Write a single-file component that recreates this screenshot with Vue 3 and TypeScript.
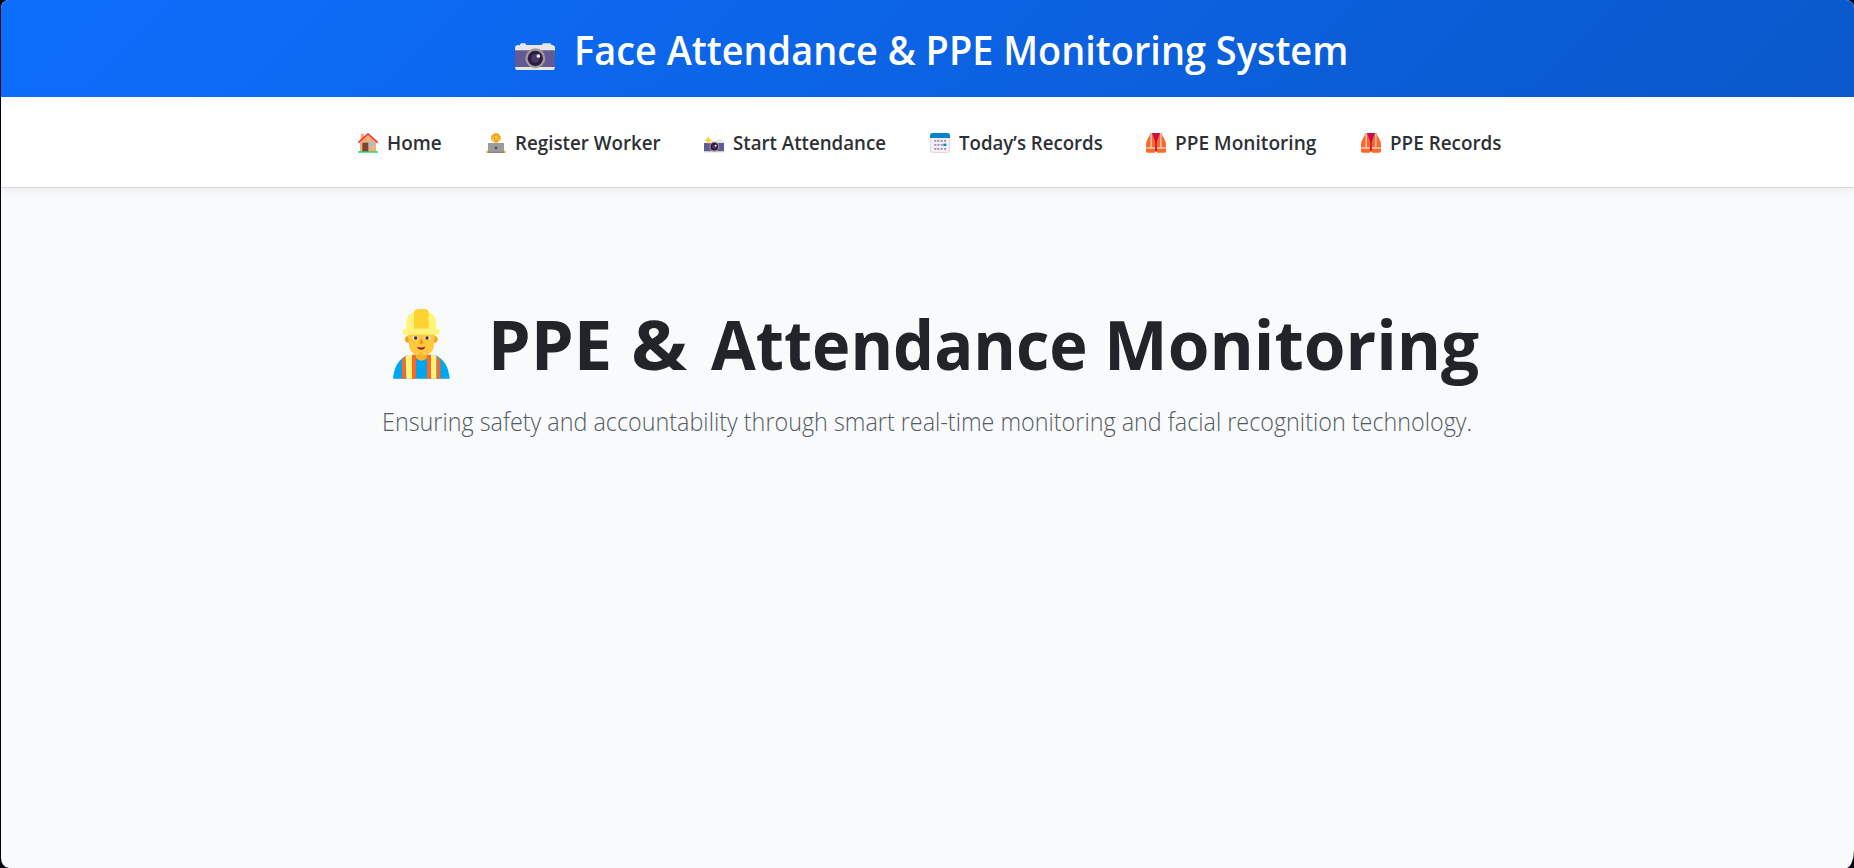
<script setup lang="ts">
interface NavItem {
  id: string
  label: string
  icon: 'home' | 'worker' | 'flash' | 'calendar' | 'vest'
  stretch: number
}

interface Word {
  text: string
  stretch: number
}

const items: NavItem[] = [
  { id: 'home', label: 'Home', icon: 'home', stretch: 0.965 },
  { id: 'register', label: 'Register Worker', icon: 'worker', stretch: 0.957 },
  { id: 'start', label: 'Start Attendance', icon: 'flash', stretch: 0.954 },
  { id: 'today', label: 'Today’s Records', icon: 'calendar', stretch: 0.951 },
  { id: 'ppe', label: 'PPE Monitoring', icon: 'vest', stretch: 0.975 },
  { id: 'records', label: 'PPE Records', icon: 'vest', stretch: 0.963 },
]

const headingWords: Word[] = [
  { text: 'PPE', stretch: 1 },
  { text: '&', stretch: 1.09 },
  { text: 'Attendance', stretch: 0.946 },
  { text: 'Monitoring', stretch: 0.984 },
]
</script>

<template>
  <div class="window">
    <header class="banner">
      <svg class="camera" viewBox="0 0 120 82">
        <path d="M14 7 18 1H30L34 6H80L84 1H106L110 6Q120 7 120 14V24H0V14Q0 7 8 6Z" fill="#e6e6e6" />
        <path d="M0 22H120V73H0Z" fill="#635994" />
        <path d="M0 72H120Q120 82 111 82H9Q0 82 0 72Z" fill="#e6e6e6" />
        <circle cx="61" cy="46" r="30" fill="#9b9b9b" />
        <circle cx="61" cy="46" r="23" fill="#321b41" />
        <circle cx="61" cy="46" r="13" fill="#433b6b" />
        <circle cx="70" cy="39" r="5.5" fill="#fff" />
      </svg>
      <h1 class="title">Face Attendance &amp; PPE Monitoring System</h1>
    </header>

    <nav class="nav">
      <a v-for="item in items" :key="item.id" class="link">
        <svg v-if="item.icon === 'home'" class="icon" viewBox="0 0 60 60">
          <path d="M8 2H18V20L8 26Z" fill="#f3ad75" />
          <path d="M6 28 30 5 54 28V56H6Z" fill="#f3ad75" />
          <path d="M1 29 30 3 59 29" fill="none" stroke="#f92f3a" stroke-width="5" />
          <path d="M13 29H31V56H13Z" fill="#7d4533" />
          <path d="M34 28H47V40H34Z" fill="#83cbff" />
          <path d="M0 55H60V59H0Z" fill="#00d26a" />
        </svg>
        <svg v-else-if="item.icon === 'worker'" class="icon" viewBox="0 0 60 60">
          <path d="M16 20Q13 9 20 5Q24 0 30 1Q38 0 41 7Q47 12 43 21L38 25H20Z" fill="#f59f0b" />
          <path d="M18 13Q26 13 31 7Q35 13 42 14V18Q42 30 30 30Q18 30 18 18Z" fill="#ffc83d" />
          <path d="M24 16H27V19H24ZM34 16H37V19H34Z" fill="#6d4534" />
          <path d="M26 23Q30 27 35 23" fill="none" stroke="#b94852" stroke-width="2" />
          <path d="M0 60V56L7 49V31H53V49L60 56V60Z" fill="#ffc83d" />
          <path d="M6 30H54V57H6Z" fill="#9b9b9b" />
          <path d="M5 56H55V60H5Z" fill="#858585" />
          <circle cx="30" cy="45" r="4.5" fill="#5e4e88" />
        </svg>
        <svg v-else-if="item.icon === 'flash'" class="icon" viewBox="0 0 60 60">
          <path d="M23 23H38L41 19H55L60 24V33H0V29H23Z" fill="#e6e6e6" />
          <path d="M0 30H60V55H0Z" fill="#635994" />
          <path d="M0 54H60V58H0Z" fill="#c9c9d0" />
          <circle cx="31" cy="41" r="15" fill="#9b9b9b" />
          <circle cx="31" cy="41" r="11.5" fill="#321b41" />
          <circle cx="31" cy="41" r="6" fill="#433b6b" />
          <circle cx="35" cy="38" r="2.8" fill="#fff" />
          <path d="M13 10 17 18 25 22 17 26 13 34 9 26 1 22 9 18Z" fill="#ffcf3d" />
        </svg>
        <svg v-else-if="item.icon === 'calendar'" class="icon" viewBox="0 0 60 60">
          <rect x="1" y="1" width="58" height="58" rx="9" fill="#f3eef8" stroke="#cdc4d6" stroke-width="2" />
          <path d="M0 15V8Q0 0 8 0H52Q60 0 60 8V15Z" fill="#0084ce" />
          <path d="M13 21H19V26H13ZM22 21H28V26H22ZM32 21H38V26H32ZM42 21H48V26H42ZM13 33H19V38H13ZM22 33H28V38H22ZM32 33H38V38H32ZM13 45H19V50H13ZM22 45H28V50H22ZM32 45H38V50H32ZM42 45H48V50H42Z" fill="#998ea4" />
          <path d="M40 32H49V39H40Z" fill="#0084ce" />
        </svg>
        <svg v-else class="icon" viewBox="0 0 60 60">
          <path d="M13 0H47Q49 10 54 16Q60 25 60 38V54Q60 59 55 59H34L30 55L26 59H5Q0 59 0 54V38Q0 25 6 16Q11 10 13 0Z" fill="#ff6723" />
          <path d="M18 0H42L31 29V54H29V29Z" fill="#ca0b4a" />
          <path d="M28 24H32V54H28Z" fill="#ca0b4a" />
          <path d="M13 0H18V43H13ZM42 0H47V43H42Z" fill="#d3bfb3" />
          <path d="M1 43H27V47H1ZM33 43H59V47H33Z" fill="#e3d3c9" />
        </svg>
        <span class="label" :style="{ transform: `scaleX(${item.stretch})` }">{{ item.label }}</span>
      </a>
    </nav>

    <main class="hero">
      <div class="headline">
        <svg class="builder" viewBox="0 0 170 209">
          <path d="M0 209Q5 154 45 138H125Q165 154 170 209Z" fill="#00a6ed" />
          <path d="M27 150 38 142V209H27ZM56 137H69V209H56ZM102 137H115V209H102ZM131 143 142 150V209H131Z" fill="#ff6723" />
          <path d="M38 142 47 137H57V209H40ZM114 137H123L130 142V209H114Z" fill="#fff478" />
          <path d="M69 136H102V145Q97 155 85 155Q73 155 69 145Z" fill="#ffb02e" />
          <circle cx="46" cy="91" r="10" fill="#ff9f0f" />
          <circle cx="124" cy="91" r="10" fill="#ff9f0f" />
          <path d="M43 75H127L123 103Q124 139 85 139Q47 139 48 103Z" fill="#ffc83d" />
          <path d="M85 89 90 103H80Z" fill="#e59200" stroke="#e59200" stroke-width="2" />
          <ellipse cx="67" cy="87" rx="9" ry="5.5" fill="#fff" />
          <ellipse cx="103" cy="87" rx="9" ry="5.5" fill="#fff" />
          <circle cx="68" cy="87" r="5.5" fill="#49333e" />
          <circle cx="102" cy="87" r="5.5" fill="#49333e" />
          <path d="M72 113Q84 118 97 113Q94 122 85 122Q75 122 72 113Z" fill="#a51745" />
          <path d="M40 67V43Q40 10 70 8H100Q129 11 129 43V67Z" fill="#fff478" />
          <path d="M63 59V8Q66 0 78 0H93Q104 0 107 9V59Z" fill="#ffd234" />
          <rect x="29" y="59" width="111" height="18" rx="8" fill="#fff478" />
        </svg>
        <h2 class="heading">
          <span
            v-for="word in headingWords"
            :key="word.text"
            class="word"
            :style="{ transform: `scaleX(${word.stretch})` }"
          >{{ word.text }}</span>
        </h2>
      </div>
      <p class="lead">Ensuring safety and accountability through smart real-time monitoring and facial recognition technology.</p>
    </main>
  </div>
</template>

<style>
body {
  margin: 0;
  background: #02030f;
}
</style>

<style scoped>
.window {
  box-sizing: border-box;
  height: 868px;
  margin-left: 1px;
  overflow: hidden;
  border-radius: 8px 8px 8px 8px / 8px 8px 18px 10px;
  background: #f8fafc;
  font-family: 'Open Sans', 'Noto Sans', sans-serif;
  color: #212529;
}
.banner {
  display: flex;
  box-sizing: border-box;
  height: 97px;
  padding-left: 514px;
  background: linear-gradient(135deg, #0d6efd, #0a58ca);
  color: #fff;
}
.camera {
  flex: none;
  width: 40px;
  height: 27.3px;
  margin-top: 42.7px;
}
.title {
  margin: 20px 0 0 18.5px;
  font-size: 39.2px;
  font-weight: 600;
  line-height: 60px;
  white-space: nowrap;
  transform: scaleX(0.967);
  transform-origin: left;
}
.nav {
  position: relative;
  display: grid;
  grid-template-columns: 128px 218px 225.5px 216.5px 215px 1fr;
  align-items: center;
  box-sizing: border-box;
  height: 90px;
  padding: 2px 0 0 357px;
  background: #fff;
  box-shadow: 0 1px 1px rgba(0, 0, 0, 0.09), 0 3px 8px rgba(0, 0, 0, 0.06);
}
.link {
  display: flex;
  align-items: center;
  color: #2d3035;
  font-size: 19.6px;
  font-weight: 600;
  line-height: 30px;
  white-space: nowrap;
}
.icon {
  flex: none;
  width: 20px;
  height: 20px;
  margin-right: 9px;
}
.label {
  transform-origin: left;
}
.hero {
  padding-top: 112px;
}
.headline {
  display: flex;
  height: 96px;
  padding-left: 392px;
}
.builder {
  flex: none;
  width: 56.7px;
  height: 69.7px;
  margin-top: 10.3px;
}
.heading {
  display: grid;
  grid-template-columns: 143.5px 79.5px 393.5px 1fr;
  margin: 0 0 0 38px;
  font-size: 68.6px;
  font-weight: 700;
  line-height: 90px;
  white-space: nowrap;
}
.word {
  justify-self: start;
  transform-origin: left;
}
.lead {
  width: max-content;
  margin: 7px 0 0 380.5px;
  color: #545a61;
  font-size: 25.2px;
  font-weight: 300;
  line-height: 38px;
  white-space: nowrap;
  transform: scaleX(0.927);
  transform-origin: left;
}
</style>
